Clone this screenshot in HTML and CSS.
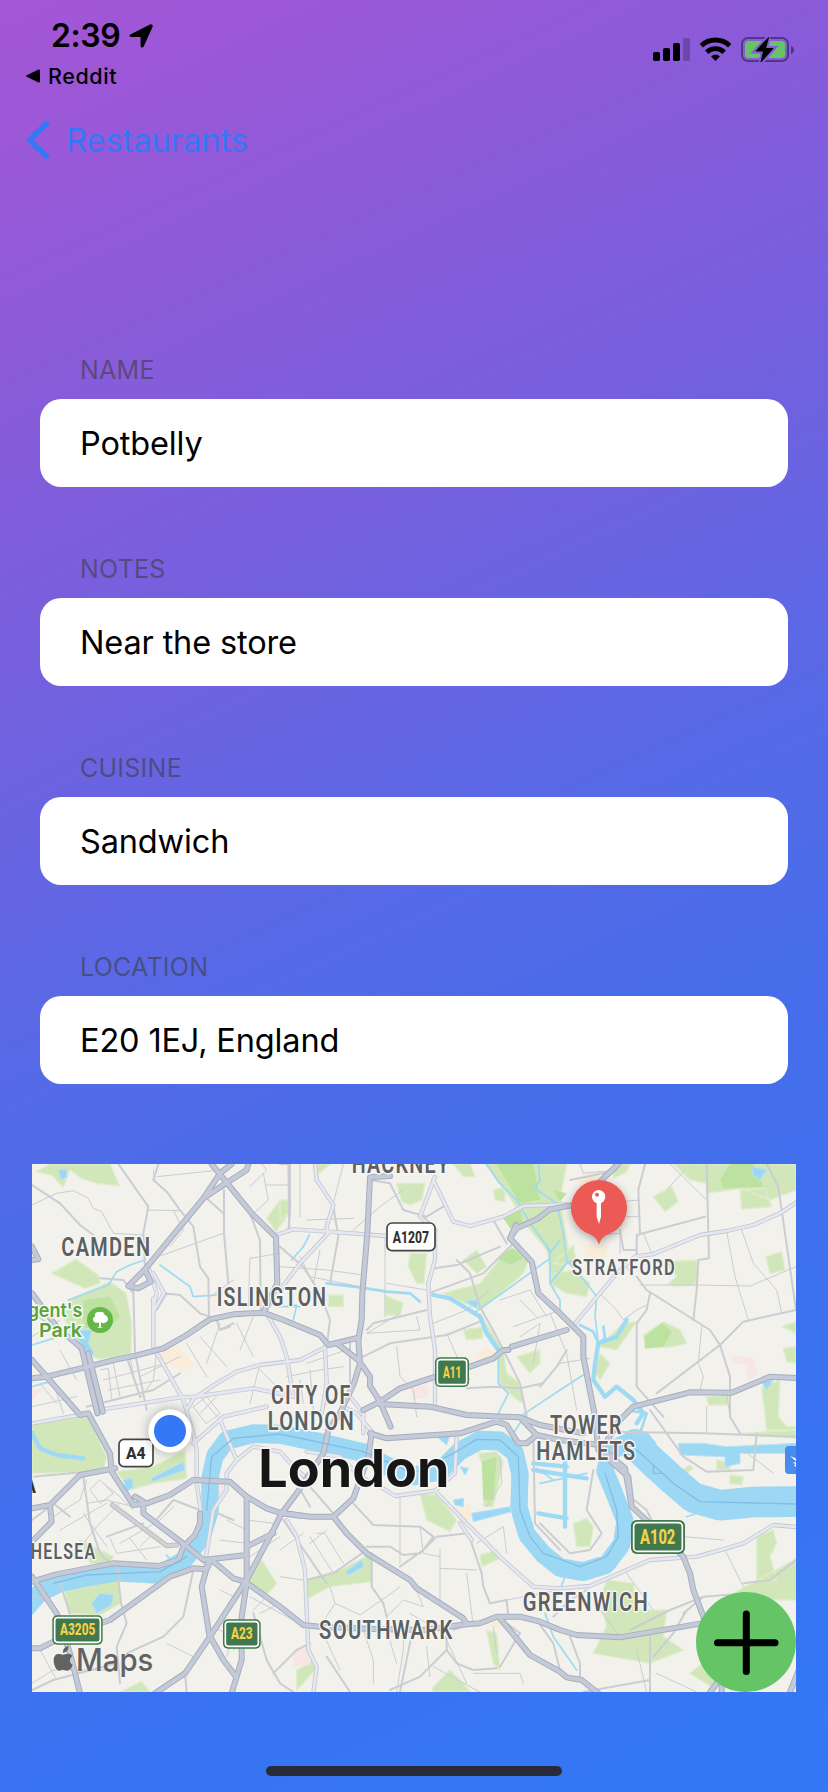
FILE: index.html
```html
<!DOCTYPE html>
<html lang="en">
<head>
<meta charset="utf-8">
<title>Restaurant</title>
<link rel="stylesheet" href="styles.css">
</head>
<body>
<div class="screen">
  <header class="status">
    <div class="status-left">
      <div class="clock"><span class="time">2:39</span>
        <svg class="locate" viewBox="0 0 24 24"><path d="M1.800 10.200 21 .6c1.700-.8 3.200.6 2.500 2.300L14.800 22.300c-.7 1.700-3.200 1.600-3.200-.6v-8.800H2.700C.3 12.900-.1 11.100 1.800 10.200z"/></svg>
      </div>
      <div class="return"><svg class="tri" viewBox="0 0 14 14"><path d="M12.500.5c.8-.3 1.500 0 1.500.9v11.200c0 .9-.7 1.200-1.500.9L.8 7.800C-.1 7.400-.1 6.600.8 6.200z"/></svg><span class="return-text">Reddit</span></div>
    </div>
    <svg class="signals" viewBox="0 0 142 28">
      <rect x="0" y="15" width="7" height="9" rx="1.800"/><rect x="10" y="11" width="7" height="13" rx="1.800"/><rect x="20" y="6" width="7" height="18" rx="1.800"/><rect class="dim" x="30" y="1" width="7" height="23" rx="1.800"/>
      <g class="wifi"><path d="M48.300 8.700a20.500 20.500 0 0 1 28.400 0"/><path d="M53.800 15.200a12.500 12.500 0 0 1 17.400 0"/></g>
      <path d="M62.500 24l-4.400-4.600a6.300 6.300 0 0 1 8.800 0z"/>
      <rect class="shell" x="89" y="1" width="46" height="23" rx="6"/><path class="dim2" d="M138 9c4 1 4 7 0 8z"/>
      <rect class="charge" x="92" y="4" width="40" height="17" rx="3.500"/>
      <path class="bolt-edge" d="M115.500.5 103 14h7.500l-2.500 11L120 11.500h-7.500z"/><path d="M115.500.5 103 14h7.500l-2.500 11L120 11.500h-7.500z" stroke="#000" stroke-linejoin="round"/>
    </svg>
  </header>
  <nav class="nav"><svg class="chevron" viewBox="0 0 24 40"><path d="M20.500 3.500 3.500 20l17 16.500"/></svg><span class="nav-title">Restaurants</span></nav>
  <main class="form">
    <section class="field"><h2>NAME</h2><div class="value">Potbelly</div></section>
    <section class="field"><h2>NOTES</h2><div class="value">Near the store</div></section>
    <section class="field"><h2>CUISINE</h2><div class="value">Sandwich</div></section>
    <section class="field"><h2>LOCATION</h2><div class="value">E20 1EJ, England</div></section>
  </main>
  <div class="map">
    <svg class="map-art" viewBox="36 42 2292 1584">
      <defs>
        <g id="thames">
          <path stroke-width="51" d="M20 1370 60 1325 120 1295 200 1278 290 1263 420 1270 490 1230 545 1160 570 1080 570 980 585 915 620 868 700 848 780 850 900 875 1030 905 1100 945 1180 975 1260 960 1320 900 1380 868 1440 870 1485 905 1500 970 1497 1070 1520 1150 1570 1210 1620 1250 1690 1262 1760 1240 1805 1180 1815 1110 1780 1020 1755 960 1770 900 1835 870"/>
          <path stroke-width="86" d="M1845 880 1890 925 1950 980 2020 1040 2100 1063 2200 1053 2340 1052"/>
        </g>
        <g id="major">
          <path d="M36 685 80 680 195 652 290 628 350 616 430 595 500 555 570 508 640 493 730 488 790 510 900 555 925 585 1015 563"/>
          <path d="M950 580 1015 630 1050 680 1050 708 1080 755 1112 830"/>
          <path d="M685 42 680 60 620 98 550 145 375 358 325 408 355 415 392 395 375 358M635 42 600 70 550 145M575 42 620 98 695 190 768 262 772 400 730 488"/>
          <path d="M1110 78 1050 82 1042 250 1027 430 1025 510 1015 570 1020 640 1002 700 960 790 925 840 910 910 830 1030 785 1090 760 1140 680 1290 570 1460 495 1570 405 1630"/>
          <path d="M1030 780 1080 755 1140 715 1230 685 1350 650 1420 625 1450 600 1465 600M1475 590 1640 540"/>
          <path d="M1080 762 1230 770 1340 795 1500 802 1560 825 1690 850M1500 802 1550 855 1620 870 1740 885M1050 850 1100 865 1320 850 1430 815 1460 825 1495 880 1520 880 1550 855"/>
          <path d="M1055 850 1045 920 1000 1045 940 1100 870 1100 785 1088M940 1100 980 1150 1040 1210 1170 1290 1190 1315 1330 1405 1340 1423 1380 1420 1430 1400 1500 1400 1560 1415 1620 1440 1670 1455 1800 1462 2045 1420"/>
          <path d="M1440 1405 1530 1515 1620 1565 1640 1582 1685 1590 1735 1630M575 1230 640 1285 675 1295 780 1370 850 1425 900 1430 1060 1437 1210 1440 1340 1423"/>
          <path d="M1795 42 1740 95 1660 165 1590 178 1550 208 1490 235 1470 265 1535 335 1555 430 1620 490 1665 535 1690 560 1690 620 1725 800 1735 900 1825 980 1835 1070 1900 1130 1990 1220 2010 1270 2020 1320 2050 1400 2070 1480M1740 890 1815 955 1835 1070M1470 265 1488 225"/>
          <path d="M2340 685 2250 680 2135 728 2010 727 1840 770 1800 810 1750 890M2070 1626 2105 1580M2105 1580 2105 1630M2310 1626 2340 1550"/>
          <path d="M36 1295 110 1273 280 1240 415 1248 475 1230 490 1190 525 1155 540 1120 540 1090"/>
          <path d="M345 1040 370 1055 370 1090 495 1185 550 1230 680 1215 680 1040 630 995 520 990 450 1035 380 1060 340 1065 275 965 270 910 205 790 180 795 36 630M36 1075 90 1065 180 975 285 955M90 1065 95 1115 36 1175"/>
          <path d="M36 1495 60 1495 150 1450 270 1410 360 1345 450 1280 520 1255 560 1258 570 1235M36 1280 110 1390 150 1510 180 1630M565 1235 545 1310 568 1455 610 1530 648 1580M635 1630 665 1530 665 1400 680 1300 680 1215M680 1040 740 1075 785 1090 840 1097M680 1190 760 1150"/>
          <path d="M36 430 110 530 185 595 232 790M205 610 248 785M36 290 55 328 36 330"/>
        </g>
        <g id="second">
          <path d="M36 820 180 795M248 778 480 742 530 740 590 700 650 665 720 645 840 630 920 590M400 445 400 590 490 750 520 850 530 900 530 1000 545 1100M385 350 410 430 400 470M400 370 432 430 402 480M500 780 525 740 700 715 820 740M520 880 610 800 740 770"/>
          <path d="M768 255 820 238 925 245 1100 258M885 42 890 90 940 165 920 230 925 250 840 340 730 488M1240 90 1300 215 1350 228 1450 200 1510 168 1640 163M1245 80 1200 200 1245 240 1245 330 1225 400 1230 500 1245 600 1245 770"/>
          <path d="M1665 520 1790 370 1845 320 1900 312 2040 255 2120 243 2200 225 2280 190 2340 150"/>
          <path d="M860 905 960 920 1020 980 1080 1010 1125 1038 1245 1022 1340 1120 1450 1230 1540 1310 1620 1315 1710 1308 1890 1230 2030 1220 2120 1195 2170 1180 2260 1125 2340 1132M1245 1022 1305 970 1310 860M1320 1120 1355 1170"/>
          <path d="M800 1110 830 1160 855 1260 865 1500 890 1550 880 1630M600 810 650 930 620 970 620 1020 580 1080 555 1240M650 930 700 890 780 905 830 960 880 1000M740 490 780 560 800 620 820 740M915 590 920 700 905 790M990 740 1030 790 1030 850M970 770 1010 790 1060 850"/>
        </g>
      </defs>
      <rect class="land" x="36" y="42" width="2292" height="1584"/>
      <g class="parks">
        <path d="M50 65 90 42H270L298 108 230 100 185 85 150 60 130 112 95 75zM95 370 168 328 235 375 240 400 195 415zM145 450 270 395 318 430 335 520 333 610 240 628 175 600 130 500zM36 822 205 800 260 920 250 965 36 970zM290 965 400 950 495 900 500 985 400 1000 330 1020zM740 205 780 150 815 165 800 200 768 245zM130 1290 290 1255 303 1360 240 1395 145 1390zM180 1170 280 1220 270 1245 210 1240zM690 1260 725 1230 770 1300 740 1335 690 1300zM300 1626 365 1595 390 1626z"/>
        <path d="M780 150H810V185L780 210zM890 42H930L895 72zM1130 100H1215L1205 150 1170 165 1145 155zM1170 310H1220L1212 400 1190 400 1165 350zM925 435H970V470H925zM1095 435 1150 460 1140 495 1097 495zM1270 430 1380 400 1470 290 1530 320 1510 370 1430 440 1380 480zM1330 330 1370 300 1400 350 1370 370zM1395 42H1640L1620 150 1650 320 1600 420 1580 300 1510 215 1475 150zM1420 120 1455 110 1455 155 1425 150zM1330 540 1390 530 1385 565 1340 570zM1380 490 1450 600 1460 670 1500 700 1510 760 1485 745 1440 700 1430 600zM1490 620 1560 600 1560 640 1530 670zM1300 42H1350L1365 80 1330 80z"/>
        <path d="M1780 42H1830L1820 65 1780 85zM1960 42H2060V100L2010 90zM2060 42H2328V120L2250 150 2165 115 2060 130zM2160 120 2235 115 2255 170 2165 178zM1900 140 1955 110 1975 155 1935 185zM1935 335 2030 330 2035 370 2025 405 1960 408 1945 400 1970 380zM1870 555 1900 535 1930 515 1980 540 2000 580 1960 590 1875 595zM1600 370 1665 360 1710 400 1700 440 1640 430 1590 400zM1810 520 1850 515 1790 600 1735 590zM1740 610 1770 640 1740 690 1720 660zM2238 320 2285 305 2295 360 2250 370zM2060 740 2125 735 2125 765 2065 765zM2225 710 2280 690 2275 800 2300 830 2328 830V840H2240zM2285 530 2328 515V550zM2290 595 2328 590V640L2300 635zM1660 285 1670 345 1600 340z"/>
        <path d="M855 1290 960 1260 1055 1210 1055 1295 930 1310 865 1345zM1200 1030 1250 1035 1310 1110 1290 1145 1220 1110zM1375 910 1430 905 1450 935 1420 1070 1390 1070 1400 980zM1380 1215 1430 1200 1440 1225 1385 1250zM1400 1440 1430 1450 1440 1560 1420 1540zM1240 1610 1290 1560 1330 1600 1350 1626H1235zM830 1560 880 1530 885 1560 830 1620z"/>
        <path d="M1660 1120 1700 1105 1720 1130 1710 1190 1670 1190zM1760 1290 1840 1300 1850 1380 1940 1380 1930 1460 1990 1500 1890 1540 1720 1510 1760 1430 1740 1350zM2090 930 2130 940 2130 960 2090 960zM2130 975 2170 980 2165 1005 2130 1000zM1970 970 2010 945 2020 955 1980 985zM2165 850 2328 840V865L2180 855zM2210 1160 2260 1140 2270 1180 2250 1220 2270 1290 2210 1290zM2140 1330 2340 1220V1350L2250 1350zM2010 1570 2060 1530 2100 1570 2090 1620z"/>
      </g>
      <g class="parks-deep"><path d="M190 450 270 440 300 500 250 550 190 530zM1430 42H1540L1560 150 1500 160zM1450 205 1500 170 1510 220 1470 235zM1430 325 1480 295 1510 325 1470 345zM1600 120 1640 130 1620 155zM1875 560 1925 520 1955 545 1930 590 1875 595zM2100 90 2130 42H2200L2230 110 2110 115zM1385 935 1430 920 1420 1050 1390 1050z"/></g>
      <g class="warm"><path d="M425 600 475 590 520 640 490 665 420 625zM1360 625 1400 590 1430 610 1400 635zM1690 285H1760L1755 325 1700 325zM1670 80 1740 60 1740 100 1680 110zM1300 1070 1350 1065 1355 1105 1320 1115zM1400 1420 1440 1410 1445 1440z"/></g>
      <g class="rose"><path d="M1170 710 1225 705 1225 740 1180 750zM2135 615 2200 625 2215 670 2185 695 2180 645 2135 640zM820 1510 860 1490 870 1545 820 1550zM36 720 75 710 36 750zM590 1000 615 1000 610 1035 590 1035z"/></g>
      <use href="#thames" class="bank"/>
      <use href="#thames" class="river"/>
      <g class="ponds">
        <path d="M115 60 140 58 140 80 125 90zM155 540 215 540 205 580 225 615 195 600zM310 990 335 985 340 1010 320 1025zM395 985 490 935 495 960 395 995zM215 1360 240 1330 280 1335 275 1365 230 1390zM978 1265 1025 1230 1030 1250 985 1275zM1335 455 1375 450 1370 475z"/>
        <path d="M2195 50 2240 60 2220 90 2200 75zM2225 695 2260 690 2240 720zM1300 1050 1330 1045 1330 1070 1305 1065zM1320 950 1345 955 1335 975zM1250 860 1290 855 1280 885zM1355 1090 1470 1070 1475 1085 1360 1115z"/>
        <path d="M1975 880 2050 880 2120 890 2328 880V910L2160 910 2160 940 2115 950 2115 920 1980 915z"/>
      </g>
      <g class="streams">
        <path class="wide" d="M36 850 60 895 110 915 190 925M1240 435 1290 445 1380 500 1400 550 1435 600M1555 1090 1640 1105M1635 930V1130M1540 960 1700 985M1540 940 1640 950M1820 510 1790 560 1735 580 1725 640 1720 690 1755 740 1790 710 1840 750 1870 790 1850 820"/>
        <path class="mid" d="M920 400 1020 412 1100 425 1170 430 1200 455M1680 525 1720 545 1735 580 1755 565 1750 530M1820 780 1880 790 1860 850 1840 850M1880 850 1905 880"/>
        <path d="M145 450 265 405 290 365 330 345 375 330M420 345 510 410 520 440 590 435M780 470 840 470M815 330 850 290 868 255M36 585 100 565M36 710 90 695"/>
        <path d="M1400 42 1435 95 1490 150 1530 220 1575 280 1590 310 1590 400 1620 450 1620 490M1555 42 1560 90 1545 115 1610 160 1630 250 1640 330 1700 400 1730 440 1725 500 1735 580M1360 490 1460 420 1590 325M1435 600 1435 700 1465 730 1430 800M1500 800 1620 720 1690 675M1590 310 1620 270M1560 260 1590 300M1590 400 1640 340 1660 330M1635 1280 1600 1370M1575 1390 1600 1460 1670 1560M1700 970 1560 1000M1480 850 1520 790"/>
        <path d="M800 470 830 465 820 510M440 1215 455 1235M1550 955 1600 990M2000 1100 2060 1080"/>
      </g>
      <g class="tiny">
        <path d="M36 165 110 130 160 122 205 145 220 175 245 185 280 250 370 255M380 180 480 182 520 230M410 80 600 60M460 180 490 240 450 290M405 90 400 60M690 110 740 60 725 42M740 105H810M730 70 745 150 690 200M415 320 610 250M690 325 780 310M690 325 685 470M570 440 640 390M36 560 120 510M240 660 265 655 275 745M250 690 440 640M280 640 300 740M330 620 345 700M120 600 170 690M60 700 110 760M36 770 170 740M100 700 130 790M265 720 420 690M360 680 480 620M410 600 400 690 360 745M500 580 560 680M540 560 620 650M600 520 560 640M650 520 700 620M700 500 660 600"/>
        <path d="M520 770 560 740 600 790 560 820zM540 790 590 740M540 740 600 810M700 640 780 720M720 640 690 760M840 200 840 42M780 350 920 360 1030 375M840 320 870 380 1020 410M970 42 940 160M860 210 1000 205M900 300 880 400M1000 240 1080 170 1150 120M1100 400 1220 420M1095 258V500M1190 500 1200 540 1040 550 1140 490M1130 590 1140 680 1180 720 1190 800M1240 520 1340 480 1410 420M1280 550 1320 640 1350 690M1500 450 1550 500M1440 450 1530 420 1580 500M1480 530 1620 480M1500 560 1560 520 1540 640M860 640 980 600M800 680 900 660 970 650M840 690 850 760M870 660 880 780M900 780 990 700"/>
        <path d="M1680 42 1690 70 1790 60M1940 120 1990 65M1800 155 1860 150M1820 200 1855 200M1870 250 1895 310M1860 405 2030 405 2190 408 2328 350M2120 245 2145 380 2185 510M2165 240 2200 340 2270 420 2285 490M1840 380 1810 340M1590 490 1640 610 1670 780M1570 700 1620 640 1710 625M1740 430 1790 480 1810 510 1850 480 1880 465M2045 530 2035 640 2050 680 2040 720M2060 770V845M2130 800 2120 730M2170 900 2260 970M1740 255 1800 250 1800 310M1950 42 2060 150"/>
        <path d="M250 1000 300 1040 340 1080M200 990 180 1050 100 1100M200 1060 260 1050 340 1070M240 990 280 1030 240 1060 210 1020zM120 1140 260 1060M150 1230 230 1130 300 1060M300 1180 420 1110 460 1070M270 1165 290 1210 420 1190M190 1090 260 1190M330 1165 380 1230M400 1150 360 1190M36 1340 80 1350 100 1380M36 1600 100 1560 260 1560M60 1500 110 1590M680 1110 760 1120M690 1340 800 1400 840 1420M700 1380 740 1340M720 1390 780 1360M600 1320 640 1340M580 1430 640 1460 620 1520M690 1450 640 1500M440 1480 520 1520M620 1110 680 1140M600 1170 680 1180M690 1220 780 1160M780 1200 850 1150M780 1280 850 1290"/>
        <path d="M870 1160 940 1270M890 1150 915 1150 970 1240M870 1180 920 1140M1140 1040V1240M1200 1130 1210 1210 1260 1220M1260 1200V1360M1260 1255 1370 1260M1370 1180 1450 1130 1460 1210M930 1310 945 1360 1020 1395 1100 1340 1140 1310M1100 1400 1150 1350 1210 1370 1180 1300M945 1360 900 1430 960 1560M1030 1440 1060 1530 1060 1600M1100 1440 1130 1540M1150 1420 1150 1500 1130 1626M1170 1390 1270 1450 1340 1600M1220 1490 1230 1580M1340 1270 1360 1430M1360 1570H1500L1510 1600M1430 1510 1420 1430M1440 920 1445 1000 1400 1070M1240 1550 1380 1626M1460 1350 1620 1320M1820 1270 1900 1380M1740 1380 1800 1460M2115 1200 2170 1310M1990 1160 2110 1170M1850 1500 1880 1626M2030 1626 1910 1570"/>
      </g>
      <g class="minor">
        <path d="M36 105 120 160 180 225 220 255M295 42 385 170 370 250 375 350M415 42 400 90 440 125 480 180 520 230 540 350 565 385 567 500M560 145 610 190M612 120 612 250 625 400M690 190 720 270 722 480M810 42 810 190 805 240M240 385 310 390 340 430 345 600M340 420 345 610 380 780M320 620 360 740M430 430 480 435 540 490 570 500M440 430 410 480M590 510 600 540 640 520M600 540 630 530M36 480 80 520M200 770 400 720 480 670"/>
        <path d="M780 42 805 42 808 240M940 170 955 260 930 400M780 290 850 350 900 430 930 510 920 590M1050 90 1110 100 1150 180 1220 200 1270 170M1210 200 1250 240M1245 355 1310 345 1440 290M1225 430 1390 370 1480 280M1310 330 1350 370 1380 470 1430 560 1500 700 1520 800M1040 540 1060 520 1220 480M1030 620 1110 580 1280 555 1380 515M1340 715 1420 710 1500 715 1570 700M1420 210 1460 280M990 570V700"/>
        <path d="M1875 42 1855 120 1860 250 1850 260 1850 320M1850 255 2055 200M2060 42 2067 325 2035 330 2030 420 2020 510M1850 380 1880 420 2070 540 2100 585 2130 680 2130 800 2160 850M2328 480 2170 515 2100 585 1910 730M1890 430 1880 480 1850 520 1850 710 1930 800M2240 42 2275 110 2328 480M1650 90 1700 80 1790 60M1800 240 1810 300 1850 300M1640 600 1610 650 1560 710M1890 780 1990 920 2060 965 2200 960 2210 850M1770 845 2050 850 2328 860M1560 1120 1650 1210 1710 1200 1745 1150 1700 1080 1720 960"/>
        <path d="M190 980 210 1120 240 1210 270 1240M110 1270 150 1390M290 1240 303 1360 320 1420 290 1490 300 1600M520 1260 490 1400 430 1460 320 1510M570 1080 640 1110M260 1160 370 1120M400 1120 460 1050 540 1080M36 1110 90 1070M36 980 260 960M100 1060 150 1100M790 1110 920 1300M700 1390 740 1530 780 1600 820 1626M760 1570 830 1500 870 1480M495 1570 500 1626M36 1620 100 1590 290 1540M830 1000 870 1070M870 1010 940 1090M1000 1060 1060 1125 1200 1130 1240 1160 1210 1200 1140 1250M1040 1190 1110 1190 1150 1215 1200 1210 1250 1160 1340 1150M1055 1210V1310L1090 1360 1110 1440M860 1290 940 1270 1040 1200M1345 1150 1385 1270 1390 1310 1410 1360 1460 1350 1465 1400M1110 1620 1200 1580 1280 1500 1310 1540 1360 1560 1430 1555M1280 1440 1280 1500M920 1520 990 1626M1180 1430 1140 1626M1460 1420 1500 1450 1440 1550M1540 870 1545 1120 1620 1200M1350 1420 1300 1440M1830 1040 1880 1080 1900 1120M1550 1410 1600 1480 1620 1560M1830 1440 1950 1380 2050 1340 2180 1330M2170 1300 2250 1290 2328 1230M1990 1390 2050 1340M1900 1520 1960 1450 2000 1380M1650 1460 1680 1540 1680 1580M1690 1626 1890 1590M1890 1460 1890 1626M1600 1400 1650 1350 1700 1320"/>
      </g>
      <g class="second-edge"><use href="#second"/></g><g class="second-fill"><use href="#second"/></g>
      <g class="major-edge"><use href="#major"/></g><g class="major-fill"><use href="#major"/></g>
      <path class="grey-edge" d="M277 1065 440 1187 470 1185"/><path class="grey-fill" d="M277 1065 440 1187 470 1185"/>
      <path class="ferry" d="M100 1300 200 1275 420 1265 500 1220M560 1080 575 920 640 865 780 852 1030 905 1180 970 1300 910 1370 868 1440 870 1495 920 1500 1080 1530 1160 1570 1210 1680 1250 1760 1220 1795 1160 1790 1080 1755 970M1850 900 1960 1000 2040 1055 2328 1062M1900 945V970H1925"/>
      <g class="place">
        <text x="124" y="319" textLength="270" lengthAdjust="spacingAndGlyphs">CAMDEN</text><text x="590" y="467" textLength="332" lengthAdjust="spacingAndGlyphs">ISLINGTON</text><text x="995" y="70" textLength="296" lengthAdjust="spacingAndGlyphs">HACKNEY</text>
        <text x="753" y="763" textLength="242" lengthAdjust="spacingAndGlyphs">CITY OF</text><text x="743" y="840" textLength="262" lengthAdjust="spacingAndGlyphs">LONDON</text>
        <text class="small" x="1656" y="376" textLength="312" lengthAdjust="spacingAndGlyphs">STRATFORD</text><text x="1590" y="853" textLength="218" lengthAdjust="spacingAndGlyphs">TOWER</text><text x="1549" y="931" textLength="300" lengthAdjust="spacingAndGlyphs">HAMLETS</text>
        <text x="1508" y="1382" textLength="379" lengthAdjust="spacingAndGlyphs">GREENWICH</text><text x="897" y="1467" textLength="404" lengthAdjust="spacingAndGlyphs">SOUTHWARK</text><text class="small" x="-3" y="1227" textLength="232" lengthAdjust="spacingAndGlyphs">CHELSEA</text><text class="dark" x="6" y="1028" textLength="46" lengthAdjust="spacingAndGlyphs">A</text>
      </g>
      <text class="city" x="715" y="1011" textLength="573" lengthAdjust="spacingAndGlyphs">London</text>
      <g class="park-name"><text x="23" y="502" textLength="164" lengthAdjust="spacingAndGlyphs">gent's</text><text x="57" y="562" textLength="129" lengthAdjust="spacingAndGlyphs">Park</text></g>
      <circle cx="240" cy="510" r="39" fill="#65b74a"/>
      <path fill="#fff" d="M237 531v-13c-17 4-24-14-12-18-3-13 10-15 12-13 7-5 17 0 17 8 13 2 13 22 0 23-4 3-8 1-11-1v14l7 2H230z"/>
      <g class="shield plain"><rect x="1101" y="219" width="144" height="83" rx="15"/><text x="1118" y="280" textLength="109" lengthAdjust="spacingAndGlyphs">A1207</text><rect x="297" y="868" width="102" height="82" rx="15"/><text x="318" y="927" textLength="59" lengthAdjust="spacingAndGlyphs">A4</text></g>
      <g class="shield green">
        <rect class="outer" x="1245" y="622" width="102" height="89" rx="15"/><rect class="inner" x="1252" y="629" width="88" height="75" rx="9"/><text x="1269" y="683" textLength="55" lengthAdjust="spacingAndGlyphs">A11</text>
        <rect class="outer" x="97" y="1396" width="151" height="88" rx="15"/><rect class="inner" x="104" y="1403" width="137" height="74" rx="9"/><text x="120" y="1455" textLength="106" lengthAdjust="spacingAndGlyphs">A3205</text>
        <rect class="outer" x="609" y="1408" width="113" height="88" rx="15"/><rect class="inner" x="616" y="1415" width="99" height="74" rx="9"/><text x="633" y="1467" textLength="65" lengthAdjust="spacingAndGlyphs">A23</text>
        <rect class="outer" x="1833" y="1110" width="162" height="102" rx="17"/><rect class="inner" x="1841" y="1118" width="146" height="86" rx="11"/><text class="large" x="1860" y="1182" textLength="106" lengthAdjust="spacingAndGlyphs">A102</text>
      </g>
      <rect x="2295" y="888" width="60" height="84" rx="12" fill="#4a8ce9"/><path fill="#fff" d="M2310 918l22 9v10zM2318 938l14-3v18l-10-6 5-5z"/>
      <g class="brand">
        <path d="M145 1488c2 11-6 20-16 20-1-10 6-18 16-20zM158 1544c-4 11-10 18-17 18-5 0-7-3-12-3s-7 3-12 3c-12-2-22-34-12-45 8-9 17-3 23-3 6 0 15-6 24-1 2 1 4 3 6 5-12 8-10 22 0 26z"/>
        <text x="168" y="1562" textLength="232" lengthAdjust="spacingAndGlyphs">Maps</text>
      </g>
      <g class="callout"><path d="M1737 285c-5-18-14-28-35-35a84 84 0 1 1 70 0c-21 7-30 17-35 35z"/></g>
      <circle cx="1736" cy="140" r="20" fill="#fff"/><circle cx="1731" cy="134" r="6" fill="#eb5a54"/><path fill="#fff" d="M1730 155h13v45l-6 22-7-22z"/>
      <circle class="me" cx="450" cy="843" r="65"/><circle cx="450" cy="843" r="48" fill="#3478f6"/>
    </svg>
    <button class="add" aria-label="Add"><svg viewBox="0 0 100 100"><path d="M50.300 22v57.500M21.500 50.700H79"/></svg></button>
  </div>
  <div class="home"></div>
</div>
</body>
</html>
```
FILE: styles.css
```css
* { box-sizing: border-box; }
body { margin: 0; font-family: Inter, "Liberation Sans", sans-serif; }
.screen { width: 828px; height: 1792px; overflow: hidden; display: flex; flex-direction: column; background: linear-gradient(155.200deg, #a556d6 0%, #8a5bd9 17.600%, #7460de 32%, #566ae7 50%, #486cea 60%, #3973f1 82.400%, #3478f6 100%); }
.status { height: 100px; display: flex; justify-content: space-between; padding: 16px 33px 0 26px; }
.status-left { display: flex; flex-direction: column; }
.clock { display: flex; align-items: center; height: 40px; padding-left: 25px; gap: 9px; }
.time { font-size: 32px; font-weight: 600; line-height: 40px; letter-spacing: -0.400px; }
.locate { width: 24px; height: 24px; }
.return { display: flex; align-items: center; height: 40px; gap: 8px; }
.tri { width: 14px; height: 14px; }
.return-text { font-size: 21.500px; font-weight: 500; letter-spacing: .6px; }
.signals { width: 142px; height: 28px; margin-top: 21px; }
.dim { opacity: .22; }
.dim2 { opacity: .4; }
.wifi { fill: none; stroke: #000; stroke-width: 4.800; }
.shell { fill: none; stroke: #000; stroke-opacity: .4; stroke-width: 2; }
.charge { fill: #65c466; }
.bolt-edge { fill: #875ada; stroke: #875ada; stroke-width: 5; }
.nav { height: 80px; display: flex; align-items: center; padding-left: 26px; gap: 16px; color: #3478f6; }
.chevron { width: 24px; height: 40px; fill: none; stroke: #3478f6; stroke-width: 5.500; stroke-linecap: round; stroke-linejoin: round; }
.nav-title { font-size: 32.500px; letter-spacing: 0; }
.form { padding: 169px 40px 0; display: flex; flex-direction: column; gap: 61px; }
.field { height: 138px; display: flex; flex-direction: column; justify-content: space-between; }
.field h2 { margin: 0; padding: 4px 0 0 40px; font-size: 25px; line-height: 34px; font-weight: 400; letter-spacing: .25px; color: rgba(60, 60, 67, .6); }
.value { height: 88px; border-radius: 21px; background: #fff; padding-left: 40px; font-size: 32.500px; line-height: 89px; letter-spacing: -.15px; }
.map { position: relative; width: 764px; height: 528px; margin: 80px 0 0 32px; overflow: hidden; }
.map-art { display: block; width: 764px; height: 528px; }
.land { fill: #f2f1ec; }
.parks { fill: #d1e7b9; stroke: #deedcb; stroke-width: 4; }
.parks-deep { fill: #bde19f; }
.warm { fill: #f9ecd8; }
.rose { fill: #f8e6e3; }
.bank, .river, .streams, .tiny, .minor, .major-edge, .major-fill, .second-edge, .second-fill, .ferry, .grey-edge, .grey-fill { fill: none; stroke-linejoin: round; stroke-linecap: round; }
.river { stroke: #9cd8f4; }
.bank { stroke: #9cd8f4; stroke-dasharray: 3 9; transform: translate(0, 6px); }
.ponds { fill: #9cd8f4; stroke: #b6e2f5; stroke-width: 3; }
.streams { stroke: #9edaf4; stroke-width: 5; }
.streams .wide { stroke-width: 13; }
.streams .mid { stroke-width: 8; }
.tiny { stroke: #c9ccd2; stroke-width: 3; }
.minor { stroke: #cbcdd3; stroke-width: 6; }
.second-edge { stroke: #c3c8d3; stroke-width: 13; }
.second-fill { stroke: #e5e8f0; stroke-width: 8; }
.major-edge { stroke: #a5aebf; stroke-width: 18; }
.major-fill { stroke: #c4cad8; stroke-width: 12; }
.grey-edge { stroke: #b5b8bf; stroke-width: 15; }
.grey-fill { stroke: #d0d2d6; stroke-width: 10; }
.ferry { stroke: #84bde4; stroke-width: 4; }
.place { font-family: Roboto, sans-serif; font-size: 76px; font-weight: 600; letter-spacing: 5px; fill: #5b6062; stroke: #f7f6f3; stroke-width: 9; stroke-linejoin: round; paint-order: stroke; }
.place .small { font-size: 65px; }
.place .dark { fill: #333; }
.city { font-size: 155px; font-weight: 700; fill: #161616; stroke: #f7f6f3; stroke-width: 10; paint-order: stroke; }
.park-name { font-size: 58px; font-weight: 600; fill: #57a33d; stroke: #f7f9f1; stroke-width: 9; paint-order: stroke; }
.shield { font-family: Roboto, sans-serif; font-size: 52px; font-weight: 800; }
.plain rect { fill: #fff; stroke: #444447; stroke-width: 5; }
.plain text { fill: #303032; }
.green .outer { fill: #40794e; }
.green .inner { fill: #40794e; stroke: #fff; stroke-width: 5; }
.green text { fill: #f8d148; }
.green .large { font-size: 59px; }
.brand { fill: #626262; font-size: 93px; font-weight: 500; }
.callout { fill: #eb5a54; filter: drop-shadow(0 8px 12px rgba(0, 0, 0, .3)); }
.me { fill: #fff; filter: drop-shadow(0 0 16px rgba(0, 0, 0, .3)); }
.add { position: absolute; right: 0; bottom: 0; width: 100px; height: 100px; border: 0; padding: 0; border-radius: 50%; background: #65c466; }
.add svg { display: block; width: 100px; height: 100px; fill: none; stroke: #000; stroke-width: 7; stroke-linecap: round; }
.home { width: 296px; height: 10px; border-radius: 5px; background: #292c38; margin: 74px auto 0; }
```
